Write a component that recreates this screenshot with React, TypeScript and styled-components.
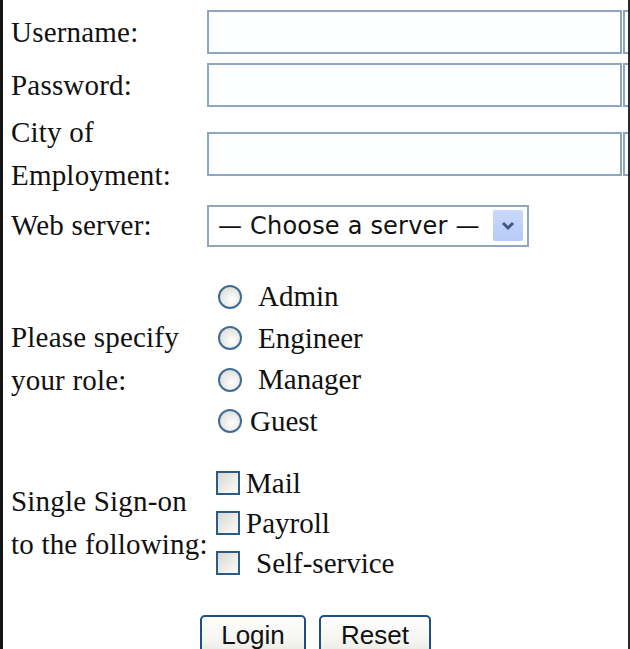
import React from "react";
import styled, { createGlobalStyle } from "styled-components";

const Global = createGlobalStyle`
  html, body { margin: 0; padding: 0; background: #fff; overflow: hidden; }
  body { width: 630px; height: 649px; }
`;

const Page = styled.div`
  box-sizing: border-box;
  width: 630px;
  height: 649px;
  border-left: 3px solid #161616;
  border-right: 2px solid #2a2a2a;
  background: #fff;
  overflow: hidden;
  padding-top: 10px;
  font-family: "Liberation Serif", "Times New Roman", serif;
  font-size: 29px;
  color: #111;
`;

const Row = styled.div<{ $top: number }>`
  display: flex;
  align-items: center;
  margin-top: ${(p) => p.$top}px;
`;

const Label = styled.div`
  width: 204px;
  flex: none;
  box-sizing: border-box;
  padding-left: 8px;
  line-height: 43px;
  letter-spacing: 0.2px;
  white-space: nowrap;
`;

const FieldWrap = styled.div`
  display: flex;
  align-items: stretch;
  height: 44px;
`;

const TextBox = styled.input`
  box-sizing: border-box;
  width: 415px;
  height: 44px;
  margin: 0;
  border: 2px solid #8ea6bf;
  background: #fcfeff;
  outline: none;
`;

const Tail = styled.div`
  box-sizing: border-box;
  width: 12px;
  height: 44px;
  margin-left: 1px;
  border: 2px solid #8ea6bf;
  border-right: none;
  background: #fcfeff;
`;

const SelectBox = styled.div`
  box-sizing: border-box;
  width: 322px;
  height: 42px;
  border: 2px solid #8ea6bf;
  background: #fff;
  display: flex;
  align-items: center;
  padding: 0 4px 0 9px;
  font-family: "DejaVu Sans", "Liberation Sans", sans-serif;
  font-size: 24px;
  letter-spacing: 0.2px;
  color: #111;
`;

const SelectText = styled.span`
  flex: 1;
  white-space: nowrap;
`;

const ArrowBtn = styled.div`
  width: 30px;
  height: 31px;
  border-radius: 2px;
  background: linear-gradient(180deg, #c9d8fb 0%, #b6cbf7 100%);
  display: flex;
  align-items: center;
  justify-content: center;
  flex: none;
`;

const Options = styled.div<{ $rowH: number }>`
  display: flex;
  flex-direction: column;
  > * {
    height: ${(p) => p.$rowH}px;
  }
`;

const Option = styled.label<{ $gap: number; $indent: number }>`
  display: flex;
  align-items: center;
  gap: ${(p) => p.$gap}px;
  padding-left: ${(p) => p.$indent}px;
  line-height: 1;
`;

const RadioDot = styled.span`
  box-sizing: border-box;
  width: 24px;
  height: 24px;
  border-radius: 50%;
  border: 2px solid #3f6c95;
  background: radial-gradient(circle at 60% 65%, #ffffff 0%, #e8e8e4 55%, #d4d4cf 100%);
  flex: none;
`;

const CheckBox = styled.span`
  box-sizing: border-box;
  width: 24px;
  height: 24px;
  border: 2px solid #2b5c87;
  background: linear-gradient(135deg, #d9d9d3 0%, #ececE8 55%, #fafafa 100%);
  flex: none;
`;

const ButtonRow = styled.div`
  display: flex;
  justify-content: center;
  gap: 13px;
  margin-top: 32px;
`;

const Button = styled.button<{ $w: number }>`
  box-sizing: border-box;
  width: ${(p) => p.$w}px;
  height: 44px;
  border: 2px solid #1e4f86;
  border-radius: 5px;
  background: linear-gradient(180deg, #ffffff 0%, #f4f4f0 60%, #e6e6e0 100%);
  font-family: "Liberation Sans", Arial, sans-serif;
  font-size: 26px;
  color: #111;
  padding: 0;
  line-height: 36px;
  display: flex;
  justify-content: center;
  align-items: flex-start;
`;

export default function App() {
  return (
    <>
      <Global />
      <Page>
        <Row $top={0}>
          <Label>Username:</Label>
          <FieldWrap>
            <TextBox type="text" />
            <Tail />
          </FieldWrap>
        </Row>
        <Row $top={9}>
          <Label>Password:</Label>
          <FieldWrap>
            <TextBox type="password" />
            <Tail />
          </FieldWrap>
        </Row>
        <Row $top={4}>
          <Label>
            City of
            <br />
            Employment:
          </Label>
          <FieldWrap>
            <TextBox type="text" />
            <Tail />
          </FieldWrap>
        </Row>
        <Row $top={7}>
          <Label>Web server:</Label>
          <SelectBox>
            <SelectText>— Choose a server —</SelectText>
            <ArrowBtn>
              <svg width="14" height="10" viewBox="0 0 14 10">
                <path d="M2 2 L7 7 L12 2" fill="none" stroke="#3f5784" strokeWidth="3" />
              </svg>
            </ArrowBtn>
          </SelectBox>
        </Row>
        <Row $top={29}>
          <Label>
            Please specify
            <br />
            your role:
          </Label>
          <Options $rowH={41.5}>
            <Option $gap={16} $indent={11}><RadioDot />Admin</Option>
            <Option $gap={16} $indent={11}><RadioDot />Engineer</Option>
            <Option $gap={16} $indent={11}><RadioDot />Manager</Option>
            <Option $gap={8} $indent={11}><RadioDot />Guest</Option>
          </Options>
        </Row>
        <Row $top={21}>
          <Label>
            Single Sign-on
            <br />
            to the following:
          </Label>
          <Options $rowH={40}>
            <Option $gap={6} $indent={9}><CheckBox />Mail</Option>
            <Option $gap={6} $indent={9}><CheckBox />Payroll</Option>
            <Option $gap={16} $indent={9}><CheckBox />Self-service</Option>
          </Options>
        </Row>
        <ButtonRow>
          <Button $w={106}>Login</Button>
          <Button $w={112}>Reset</Button>
        </ButtonRow>
      </Page>
    </>
  );
}
